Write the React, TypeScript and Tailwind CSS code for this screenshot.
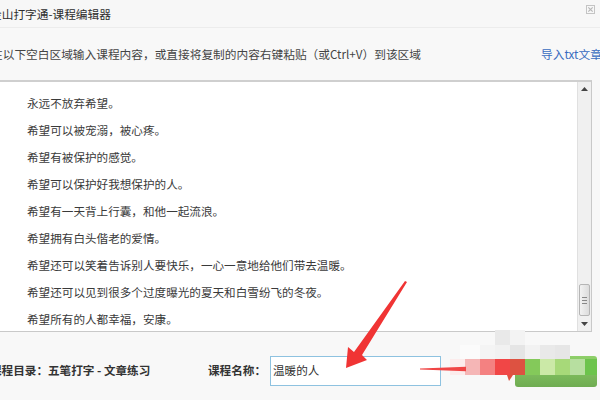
import React from "react";

const lines = [
  "永远不放弃希望。",
  "希望可以被宠溺，被心疼。",
  "希望有被保护的感觉。",
  "希望可以保护好我想保护的人。",
  "希望有一天背上行囊，和他一起流浪。",
  "希望拥有白头偕老的爱情。",
  "希望还可以笑着告诉别人要快乐，一心一意地给他们带去温暖。",
  "希望还可以见到很多个过度曝光的夏天和白雪纷飞的冬夜。",
  "希望所有的人都幸福，安康。",
];

const mosaic: [number, number, number, number, string][] = [
  [495, 330, 15, 15, "#e9e9e9"],
  [510, 330, 15, 15, "#f3f3f3"],
  [460, 345, 20, 14, "#fbfbfb"],
  [480, 345, 15, 14, "#f4f4f4"],
  [495, 345, 15, 14, "#f1f1f1"],
  [510, 345, 15, 14, "#e5e5e5"],
  [525, 345, 15, 14, "#f2f2f2"],
  [540, 345, 15, 14, "#e9e9e9"],
  [555, 345, 15, 14, "#e6e6e6"],
  [450, 359, 15, 16, "#fcecec"],
  [465, 359, 15, 16, "#f5b6b6"],
  [480, 359, 15, 16, "#f48181"],
  [495, 359, 15, 16, "#f14646"],
  [510, 359, 15, 16, "#dd5241"],
  [525, 359, 15, 16, "#84c95a"],
  [540, 359, 15, 16, "#cbe9a7"],
  [555, 359, 15, 16, "#a7d979"],
  [570, 359, 15, 16, "#b7dfa0"],
  [585, 359, 12, 16, "#6cc44c"],
];

export default function App() {
  return (
    <div
      className="relative w-[600px] h-[400px] overflow-hidden bg-[#f8f8f8] text-[#333]"
      style={{ fontFamily: '"Noto Sans CJK SC", "Noto Sans", sans-serif' }}
    >
      {/* title bar */}
      <div className="h-[28px] flex items-center justify-between border-b border-[#ececec] bg-[#f7f7f7]">
        <span className="ml-[-10px] text-[11.7px] leading-none text-[#2e2e2e] whitespace-nowrap">
          金山打字通-课程编辑器
        </span>
        <svg width="9" height="9" viewBox="0 0 9 9" className="mr-[5px] mt-[-8px]">
          <rect x="0.5" y="0.5" width="8" height="8" fill="none" stroke="#c4c4c4" />
          <path d="M2.3 2.3 L6.7 6.7 M6.7 2.3 L2.3 6.7" stroke="#b8b8b8" strokeWidth="1.2" />
        </svg>
      </div>

      {/* instruction row */}
      <div className="h-[52px] flex items-center">
        <span className="ml-[-9px] w-[550px] shrink-0 text-[11.7px] leading-none text-[#444] whitespace-nowrap">
          在以下空白区域输入课程内容，或直接将复制的内容右键粘贴（或Ctrl+V）到该区域
        </span>
        <span className="shrink-0 text-[11.7px] leading-none text-[#3a6cc0] whitespace-nowrap">
          导入txt文章
        </span>
      </div>

      {/* text area */}
      <div className="w-[592px] h-[252px] flex bg-white border-t-2 border-r border-b border-[#c9c9c9] border-t-[#cfcfcf]">
        <div className="flex-1 pl-[27px] pt-[8px]">
          {lines.map((l) => (
            <div key={l} className="text-[11.6px] leading-[27px] text-[#3a3a3a] whitespace-nowrap">
              {l}
            </div>
          ))}
        </div>
        <div className="w-[14px] flex flex-col bg-[#f0f0f0] border-l border-[#e0e0e0]">
          <div className="h-[14px] flex items-center justify-center">
            <svg width="7" height="4" viewBox="0 0 7 4">
              <path d="M0 4 L3.5 0 L7 4 Z" fill="#444" />
            </svg>
          </div>
          <div className="flex-1" />
          <div className="h-[32px] mx-[1px] rounded-[2px] border border-[#b5b5b5] bg-gradient-to-r from-[#f2f2f2] to-[#dcdcdc] flex flex-col items-center justify-center gap-[2px]">
            <div className="w-[5px] h-px bg-[#888]" />
            <div className="w-[5px] h-px bg-[#888]" />
            <div className="w-[5px] h-px bg-[#888]" />
          </div>
          <div className="h-[15px] flex items-center justify-center">
            <svg width="7" height="4" viewBox="0 0 7 4">
              <path d="M0 0 L3.5 4 L7 0 Z" fill="#444" />
            </svg>
          </div>
        </div>
      </div>

      {/* bottom row */}
      <div className="h-[67px] flex items-start pt-[24px]">
        <div className="h-[30px] w-full flex items-center">
          <span className="ml-[-10px] w-[218px] shrink-0 text-[11.6px] font-semibold text-[#333] whitespace-nowrap">
            课程目录：五笔打字 - 文章练习
          </span>
          <span className="w-[62px] shrink-0 text-[11.6px] font-bold text-[#333] whitespace-nowrap">
            课程名称：
          </span>
          <div className="w-[171px] h-[30px] shrink-0 border border-[#8ec2e0] bg-white flex items-center pl-[2px]">
            <span className="text-[11.6px] text-[#333]">温暖的人</span>
          </div>
          <div className="ml-auto mr-[3px] w-[82px] h-[31px] rounded-[3px] bg-gradient-to-b from-[#8fd06a] to-[#6fac52]" />
        </div>
      </div>

      {/* mosaic redaction */}
      {mosaic.map(([x, y, w, h, c], i) => (
        <div
          key={i}
          className="absolute"
          style={{ left: x, top: y, width: w, height: h, backgroundColor: c }}
        />
      ))}

      {/* red annotation arrow and line */}
      <svg className="absolute left-0 top-0 pointer-events-none" width="600" height="400" viewBox="0 0 600 400">
        <polygon
          points="407,282 362,355 367,360 346,368 348,347 354,352 405,281"
          fill="#f03434"
        />
        <polygon points="420,368.6 466,366.8 466,371.2 420,369.6" fill="#f04545" />
        <polygon points="507,375 513,375 509,381" fill="#e05040" />
      </svg>
    </div>
  );
}
